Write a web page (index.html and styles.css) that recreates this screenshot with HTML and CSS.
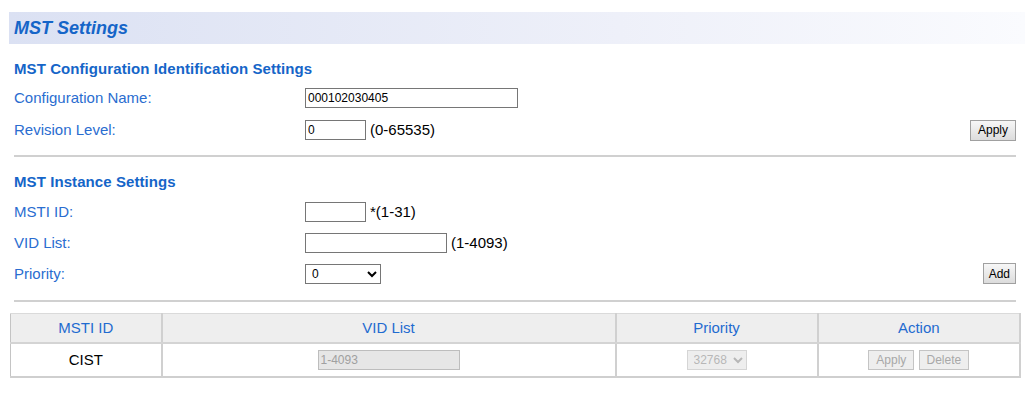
FILE: index.html
```html
<!DOCTYPE html>
<html lang="en">
<head>
  <meta charset="UTF-8">
  <title>MST Settings</title>
  <link rel="stylesheet" href="styles.css">
</head>
<body>
  <div class="page">
    <div class="title-bar">
      <h1>MST Settings</h1>
    </div>

    <div class="content">
      <h2>MST Configuration Identification Settings</h2>
      <div class="row">
        <label class="label">Configuration Name:</label>
        <div class="field"><input type="text" class="w-name" value="000102030405"></div>
      </div>
      <div class="row">
        <label class="label">Revision Level:</label>
        <div class="field"><input type="text" class="w-short" value="0"><span class="hint">(0-65535)</span></div>
        <button class="btn">Apply</button>
      </div>

      <hr class="divider">

      <h2>MST Instance Settings</h2>
      <div class="row row-tight">
        <label class="label">MSTI ID:</label>
        <div class="field"><input type="text" class="w-short" value=""><span class="hint">*(1-31)</span></div>
      </div>
      <div class="row row-tight">
        <label class="label">VID List:</label>
        <div class="field"><input type="text" class="w-vid" value=""><span class="hint">(1-4093)</span></div>
      </div>
      <div class="row row-tight">
        <label class="label">Priority:</label>
        <div class="field">
          <select class="w-prio">
            <option>0</option>
            <option>4096</option>
            <option>8192</option>
          </select>
        </div>
        <button class="btn btn-add">Add</button>
      </div>

      <hr class="divider divider-last">
    </div>

    <table class="msti-table">
      <thead>
        <tr>
          <th class="col-id">MSTI ID</th>
          <th class="col-vid">VID List</th>
          <th class="col-prio">Priority</th>
          <th class="col-act">Action</th>
        </tr>
      </thead>
      <tbody>
        <tr>
          <td>CIST</td>
          <td><input type="text" class="w-vid cell-input" value="1-4093" disabled></td>
          <td>
            <select class="cell-select" disabled>
              <option>32768</option>
            </select>
          </td>
          <td>
            <button class="btn btn-small" disabled>Apply</button>
            <button class="btn btn-small" disabled>Delete</button>
          </td>
        </tr>
      </tbody>
    </table>
  </div>
</body>
</html>
```

FILE: styles.css
```css
* {
  box-sizing: border-box;
}

body {
  margin: 0;
  background: #fff;
  font-family: "Liberation Sans", Arial, sans-serif;
  font-size: 15px;
  color: #000;
}

.page {
  padding: 12px 9px 0 9px;
}

.title-bar {
  height: 32px;
  margin-right: -4px;
  padding-left: 5px;
  background: linear-gradient(to right, #dbe1f3, #eef0f9 60%, #fafbfe);
}

h1 {
  margin: 0;
  font-size: 18px;
  line-height: 32px;
  font-weight: bold;
  font-style: italic;
  color: #1565c8;
}

.content {
  padding: 0 5px;
}

h2 {
  margin: 16px 0 0 0;
  font-size: 15px;
  line-height: 18px;
  font-weight: bold;
  letter-spacing: 0.08px;
  color: #1565c8;
}

.row {
  display: flex;
  align-items: center;
  height: 32px;
}

.row:first-of-type {
  margin-top: 4px;
}

.row-tight {
  height: 31px;
}

h2 + .row-tight {
  margin-top: 5px;
}

.label {
  width: 291px;
  flex-shrink: 0;
  color: #2a6dd0;
  line-height: 18px;
}

.field {
  display: flex;
  align-items: center;
}

.hint {
  margin-left: 4px;
  line-height: 18px;
}

input[type="text"] {
  height: 20px;
  padding: 0 2px;
  border: 1px solid #767676;
  border-radius: 0;
  font-family: "Liberation Sans", Arial, sans-serif;
  font-size: 12px;
  color: #000;
  background: #fff;
  outline: none;
}

.w-name {
  width: 213px;
}

.w-short {
  width: 61px;
}

.w-vid {
  width: 142px;
}

select {
  height: 20px;
  border: 1px solid #767676;
  border-radius: 0;
  background: #fff;
  font-family: "Liberation Sans", Arial, sans-serif;
  font-size: 12px;
  color: #000;
  padding: 0 2px;
}

.w-prio {
  width: 76px;
}

.btn {
  margin-left: auto;
  height: 21px;
  padding: 0 7px;
  border: 1px solid #a0a0a0;
  border-radius: 0;
  background: linear-gradient(#f7f7f7, #dcdcdc);
  font-family: "Liberation Sans", Arial, sans-serif;
  font-size: 12px;
  color: #000;
}

.btn-add {
  padding: 0 5px;
}

.divider {
  margin: 9px 0 0 0;
  height: 2px;
  border: none;
  background: #d0d0d0;
}

.divider-last {
  margin-top: 11px;
}

.msti-table {
  width: 1011px;
  margin: 11px 0 0 1px;
  border-collapse: collapse;
  table-layout: fixed;
  border-left: 1px solid #c4c4c4;
  border-top: 1px solid #dadada;
  border-right: 2px solid #cfcfcf;
  border-bottom: 2px solid #cfcfcf;
}

.msti-table th {
  height: 29px;
  background: #eeeeee;
  font-weight: normal;
  color: #1f6bd0;
  text-align: center;
  border-right: 2px solid #d0d0d0;
  border-bottom: 2px solid #d4d4d4;
}

.msti-table td {
  height: 34px;
  text-align: center;
  border-right: 2px solid #d0d0d0;
}

.col-id {
  width: 151px;
}

.col-vid {
  width: 454px;
}

.col-prio {
  width: 202px;
}

.cell-input[disabled] {
  border-color: #bdbdbd;
  background: #e6e6e6;
  color: #a0a0a0;
}

.cell-select {
  width: 60px;
  border-color: #c4c4c4;
  background: #e8e8e8;
  color: #999;
}

.btn-small {
  margin: 0;
  height: 20px;
  padding: 0 7px;
}

.btn-small[disabled] {
  border-color: #c4c4c4;
  background: #eeeeee;
  color: #a8a8a8;
}
```
